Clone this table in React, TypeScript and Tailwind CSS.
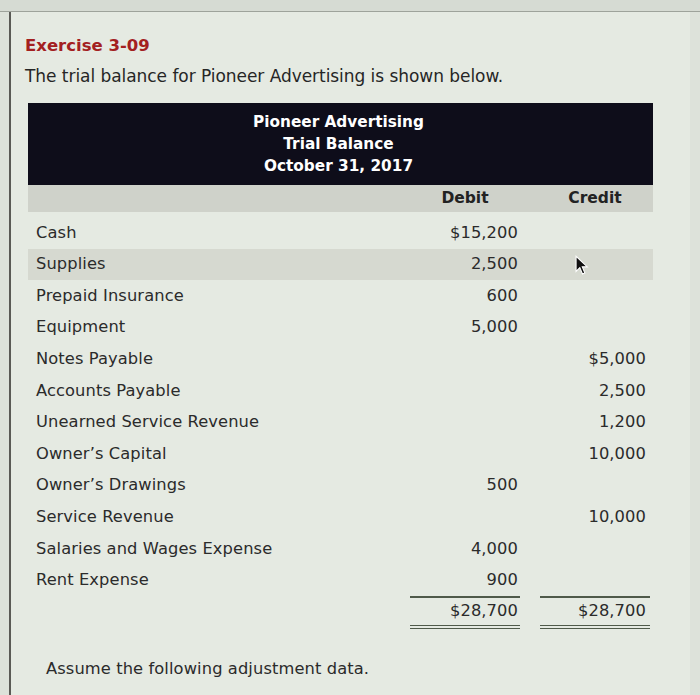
import React from "react";

const rows: [string, string, string][] = [
  ["Cash", "$15,200", ""],
  ["Supplies", "2,500", ""],
  ["Prepaid Insurance", "600", ""],
  ["Equipment", "5,000", ""],
  ["Notes Payable", "", "$5,000"],
  ["Accounts Payable", "", "2,500"],
  ["Unearned Service Revenue", "", "1,200"],
  ["Owner\u2019s Capital", "", "10,000"],
  ["Owner\u2019s Drawings", "500", ""],
  ["Service Revenue", "", "10,000"],
  ["Salaries and Wages Expense", "4,000", ""],
  ["Rent Expense", "900", ""],
];

const font = { fontFamily: '"DejaVu Sans", Verdana, sans-serif' };

export default function App() {
  return (
    <div
      className="w-[700px] h-[695px] overflow-hidden bg-[#dde2da] text-[#2b2b2b]"
      style={font}
    >
      <div className="h-[12px] border-b border-[#9ea39b] bg-[#d6dbd3]" />
      <div className="flex h-[683px]">
        <div className="w-[9px] bg-[#dde2da]" />
        <div className="w-[2px] bg-[#5a5a55]" />
        <div className="flex-1 bg-[#e5eae2] pl-[14px] pt-[23px]">
          <div className="text-[16.5px] font-bold text-[#a3201f] leading-[22px]">
            Exercise 3-09
          </div>
          <div className="mt-[8px] text-[17px] leading-[22px] tracking-[-0.05px] text-[#262626]">
            The trial balance for Pioneer Advertising is shown below.
          </div>
          <div className="mt-[16px] ml-[3px] w-[625px]">
            <div className="bg-[#0e0d1a] h-[82px] pr-[4px] flex flex-col items-center justify-center text-white font-bold text-[15.3px] leading-[22px]">
              <div>Pioneer Advertising</div>
              <div>Trial Balance</div>
              <div>October 31, 2017</div>
            </div>
            <div className="grid grid-cols-[382px_110px_20px_110px_1fr] h-[27px] bg-[#cfd2ca] items-center text-[15.5px] font-bold text-[#222]">
              <div />
              <div className="text-center">Debit</div>
              <div />
              <div className="text-center">Credit</div>
              <div />
            </div>
            <div className="mt-[5px] relative">
              {rows.map(([label, d, c], i) => (
                <div
                  key={label}
                  className={
                    "grid grid-cols-[382px_110px_20px_110px_1fr] h-[31.6px] items-center text-[16.3px] tracking-[0.1px] " +
                    (i === 1 ? "bg-[#d6d9d0]" : "")
                  }
                >
                  <div className="pl-[8px]">{label}</div>
                  <div className="text-right pr-[2px]">{d}</div>
                  <div />
                  <div className="text-right pr-[4px]">{c}</div>
                  <div />
                </div>
              ))}
              <svg
                className="absolute left-[547px] top-[38px]"
                width="15"
                height="22"
                viewBox="0 0 14 20"
              >
                <path
                  d="M1 1 L1 15 L4.5 11.5 L7 17.5 L9.2 16.5 L6.8 10.8 L11.5 10.8 Z"
                  fill="#111"
                  stroke="#fff"
                  strokeWidth="1"
                />
              </svg>
            </div>
            <div className="grid grid-cols-[382px_110px_20px_110px_1fr] text-[16.3px] tracking-[0.1px]">
              <div />
              <div className="border-t-2 border-[#4f5a4a] h-[29px] flex items-center justify-end pr-[2px]">
                $28,700
              </div>
              <div />
              <div className="border-t-2 border-[#4f5a4a] h-[29px] flex items-center justify-end pr-[4px]">
                $28,700
              </div>
              <div />
              <div />
              <div className="border-t-[1.5px] border-b-[1.5px] border-[#4f5a4a] h-[4px]" />
              <div />
              <div className="border-t-[1.5px] border-b-[1.5px] border-[#4f5a4a] h-[4px]" />
              <div />
            </div>
            <div className="mt-[29px] pl-[18px] text-[16.3px] tracking-[0.1px] leading-[22px]">
              Assume the following adjustment data.
            </div>
          </div>
        </div>
        <div className="w-[10px] bg-[#dde2da]" />
      </div>
    </div>
  );
}
